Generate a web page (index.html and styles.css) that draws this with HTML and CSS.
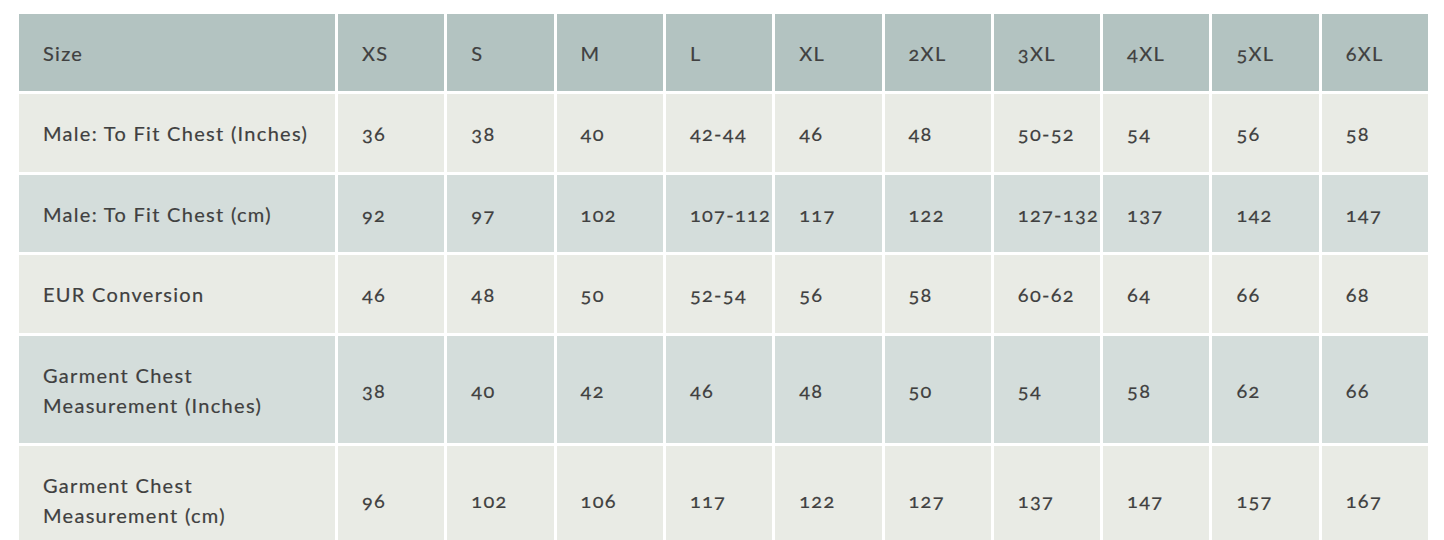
FILE: index.html
```html
<!DOCTYPE html>
<html lang="en">
<head>
<meta charset="utf-8">
<title>Size Chart</title>
<link rel="stylesheet" href="styles.css">
</head>
<body>
<div class="chart">
  <div class="cell head">Size</div>
  <div class="cell head">XS</div>
  <div class="cell head">S</div>
  <div class="cell head">M</div>
  <div class="cell head">L</div>
  <div class="cell head">XL</div>
  <div class="cell head">2XL</div>
  <div class="cell head">3XL</div>
  <div class="cell head">4XL</div>
  <div class="cell head">5XL</div>
  <div class="cell head">6XL</div>

  <div class="cell light">Male: To Fit Chest (Inches)</div>
  <div class="cell light">36</div>
  <div class="cell light">38</div>
  <div class="cell light">40</div>
  <div class="cell light">42-44</div>
  <div class="cell light">46</div>
  <div class="cell light">48</div>
  <div class="cell light">50-52</div>
  <div class="cell light">54</div>
  <div class="cell light">56</div>
  <div class="cell light">58</div>

  <div class="cell dark">Male: To Fit Chest (cm)</div>
  <div class="cell dark">92</div>
  <div class="cell dark">97</div>
  <div class="cell dark">102</div>
  <div class="cell dark">107-112</div>
  <div class="cell dark">117</div>
  <div class="cell dark">122</div>
  <div class="cell dark">127-132</div>
  <div class="cell dark">137</div>
  <div class="cell dark">142</div>
  <div class="cell dark">147</div>

  <div class="cell light">EUR Conversion</div>
  <div class="cell light">46</div>
  <div class="cell light">48</div>
  <div class="cell light">50</div>
  <div class="cell light">52-54</div>
  <div class="cell light">56</div>
  <div class="cell light">58</div>
  <div class="cell light">60-62</div>
  <div class="cell light">64</div>
  <div class="cell light">66</div>
  <div class="cell light">68</div>

  <div class="cell dark">Garment Chest<br>Measurement (Inches)</div>
  <div class="cell dark">38</div>
  <div class="cell dark">40</div>
  <div class="cell dark">42</div>
  <div class="cell dark">46</div>
  <div class="cell dark">48</div>
  <div class="cell dark">50</div>
  <div class="cell dark">54</div>
  <div class="cell dark">58</div>
  <div class="cell dark">62</div>
  <div class="cell dark">66</div>

  <div class="cell light">Garment Chest<br>Measurement (cm)</div>
  <div class="cell light">96</div>
  <div class="cell light">102</div>
  <div class="cell light">106</div>
  <div class="cell light">117</div>
  <div class="cell light">122</div>
  <div class="cell light">127</div>
  <div class="cell light">137</div>
  <div class="cell light">147</div>
  <div class="cell light">157</div>
  <div class="cell light">167</div>
</div>
</body>
</html>
```

FILE: styles.css
```css
html, body {
  margin: 0;
  padding: 0;
  background: #ffffff;
}

body {
  padding: 14px 0 0 19px;
  font-family: Lato, "Open Sans", "DejaVu Sans", sans-serif;
  font-size: 20px;
  letter-spacing: 1.3px;
  color: #404040;
  overflow: hidden;
}

.chart {
  display: grid;
  width: 1409px;
  grid-template-columns: 316px repeat(10, 1fr);
  grid-template-rows: 77px 78px 77px 78px 107px 108px;
  gap: 3px 3px;
}

.cell {
  display: flex;
  align-items: center;
  padding: 0 0 0 24px;
  line-height: 30px;
  white-space: nowrap;
  font-variant-numeric: oldstyle-nums;
  min-width: 0;
  -webkit-text-stroke: 0.2px #404040;
}

.head {
  background: #b3c3c1;
}

.light {
  background: #e9ebe5;
}

.dark {
  background: #d4dddb;
}
```
